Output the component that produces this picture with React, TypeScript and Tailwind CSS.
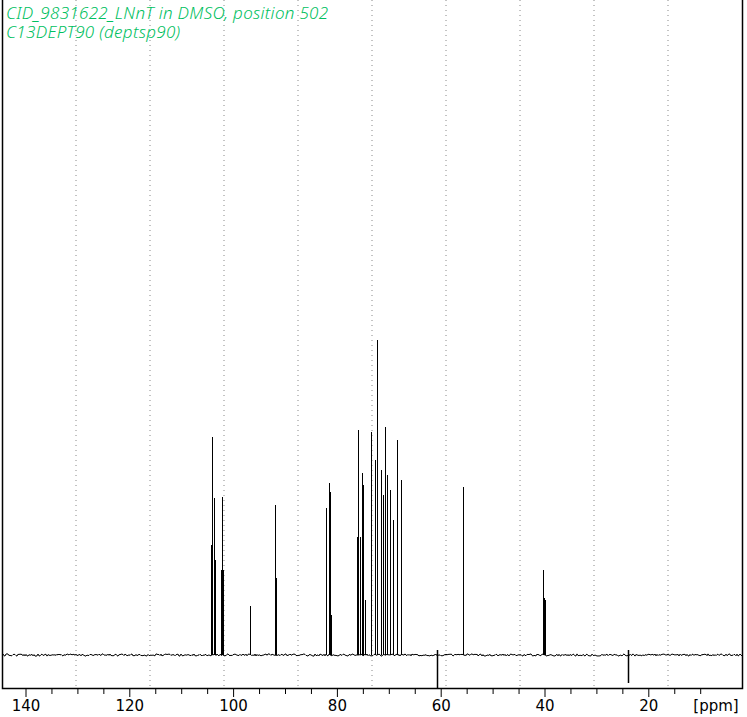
const PEAKS: [number, number][] = [
  [211, 545], [212, 437], [214, 498], [215, 560], [221, 570], [222, 497], [223, 570],
  [250, 606], [275, 505], [276, 578], [326, 508], [329, 483], [330, 492], [331, 615],
  [357, 537], [358, 430], [360, 537], [362, 473], [363, 485], [365, 600], [371, 432],
  [375, 460], [377, 340], [381, 470], [383, 495], [385, 427], [387, 475], [390, 490],
  [393, 520], [397, 440], [401, 480], [463, 487], [543, 570], [544, 598], [545, 600],
];
const NEG: [number, number][] = [[437, 688], [628, 683]];
const GRID = [76, 150, 224, 298, 372, 446, 520, 594, 668];

const xOf = (ppm: number) => 26 + (140 - ppm) * 5.19;

function noisePath() {
  let s = 12345;
  const rnd = () => ((s = (s * 16807) % 2147483647) / 2147483647);
  let d = 'M3 655';
  for (let x = 3; x <= 742; x += 1) {
    d += ` L${x} ${(655 + (rnd() - 0.5) * 2.2).toFixed(1)}`;
  }
  return d;
}

export default function App() {
  const ticks: number[] = [];
  for (let p = 140; p >= 10; p -= 5) ticks.push(p);
  return (
    <div className="relative w-[747px] h-[717px] bg-white overflow-hidden">
      <svg width="747" height="717" className="absolute inset-0">
        {GRID.map((x) => (
          <line key={x} x1={x} y1={0} x2={x} y2={688} stroke="#888" strokeDasharray="1 4" />
        ))}
        <path d={noisePath()} fill="none" stroke="#000" strokeWidth="1" />
        {PEAKS.map(([x, y], i) => (
          <line key={i} x1={x + 0.5} y1={655} x2={x + 0.5} y2={y} stroke="#000" strokeWidth="1" />
        ))}
        {NEG.map(([x, y], i) => (
          <line key={i} x1={x + 0.5} y1={650} x2={x + 0.5} y2={y} stroke="#000" strokeWidth="1.5" />
        ))}
        <rect x="2.5" y="-2" width="740" height="690.5" fill="none" stroke="#000" strokeWidth="1.5" />
        {ticks.map((p) => (
          <line key={p} x1={xOf(p)} y1={688} x2={xOf(p)} y2={p % 20 === 0 ? 697 : 694} stroke="#000" />
        ))}
        {[140, 120, 100, 80, 60, 40, 20].map((p) => (
          <text key={p} x={xOf(p)} y={711} textAnchor="middle" fontSize="15" fontFamily="DejaVu Sans, sans-serif" fill="#000">{p}</text>
        ))}
        <text x={716} y={711} textAnchor="middle" fontSize="15" fontFamily="DejaVu Sans, sans-serif" fill="#000">[ppm]</text>
      </svg>
      <div className="absolute left-[6px] top-[3px] text-[17px] leading-[19px] italic font-light tracking-[0.3px] text-[#00c060] [font-family:'DejaVu_Sans',sans-serif]">
        <div>CID_9831622_LNnT in DMSO, position 502</div>
        <div>C13DEPT90 (deptsp90)</div>
      </div>
    </div>
  );
}
